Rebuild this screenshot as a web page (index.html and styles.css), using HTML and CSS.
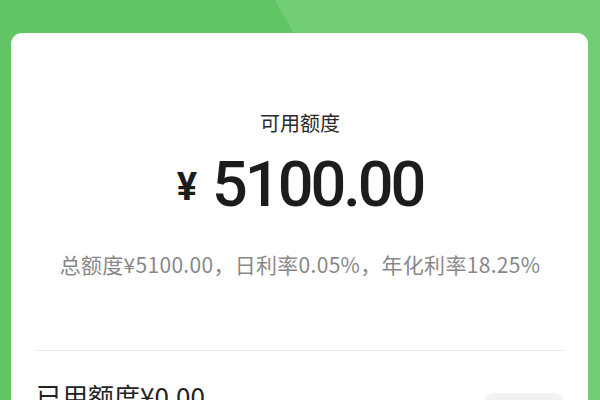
FILE: index.html
```html
<!DOCTYPE html>
<html lang="zh-CN">
<head>
<meta charset="utf-8">
<link rel="stylesheet" href="styles.css">
</head>
<body>
<div class="page">
  <div class="card">
    <div class="label">可用额度</div>
    <div class="amount"><span class="yen">¥</span><span class="num">5100.00</span></div>
    <div class="info">总额度¥5100.00，日利率0.05%，年化利率18.25%</div>
    <div class="divider"></div>
    <div class="used-row">
      <span class="used">已用额度¥0.00</span>
      <span class="btn"></span>
    </div>
  </div>
</div>
</body>
</html>
```
FILE: styles.css
```css
html, body {
  margin: 0;
  padding: 0;
}
body {
  font-family: "Noto Sans CJK SC", "Noto Sans", sans-serif;
}
.page {
  width: 600px;
  height: 400px;
  overflow: hidden;
  background: linear-gradient(60deg, #62c563 0, #62c563 438px, #71ce74 438px, #71ce74 100%);
  padding: 33px 12px 0 11px;
  box-sizing: border-box;
}
.card {
  background: #fff;
  border-radius: 11px;
  height: 420px;
  padding: 0 24px 0 25px;
  display: flex;
  flex-direction: column;
  align-items: center;
}
.label {
  margin-top: 76px;
  font-size: 20px;
  line-height: 28px;
  color: #2a2a2a;
}
.amount {
  margin-top: 16px;
  display: flex;
  align-items: baseline;
  color: #1c1c1c;
  font-family: Roboto, "DejaVu Sans", sans-serif;
  line-height: 64px;
}
.yen {
  font-size: 38px;
  font-weight: 700;
  margin-right: 15px;
  position: relative;
  top: -6px;
}
.num {
  font-size: 63px;
  font-weight: 500;
  letter-spacing: -3px;
}
.info {
  margin-top: 25px;
  font-size: 21px;
  line-height: 28px;
  letter-spacing: 0.3px;
  color: #888;
  white-space: nowrap;
}
.divider {
  align-self: stretch;
  height: 1px;
  background: #ececec;
  margin-top: 72px;
}
.used-row {
  align-self: stretch;
  display: flex;
  justify-content: space-between;
  margin-top: 29px;
}
.used {
  font-size: 26px;
  line-height: 32px;
  color: #222;
}
.btn {
  width: 80px;
  height: 30px;
  margin-top: 13px;
  border-radius: 10px;
  background: #f2f2f2;
}
```
